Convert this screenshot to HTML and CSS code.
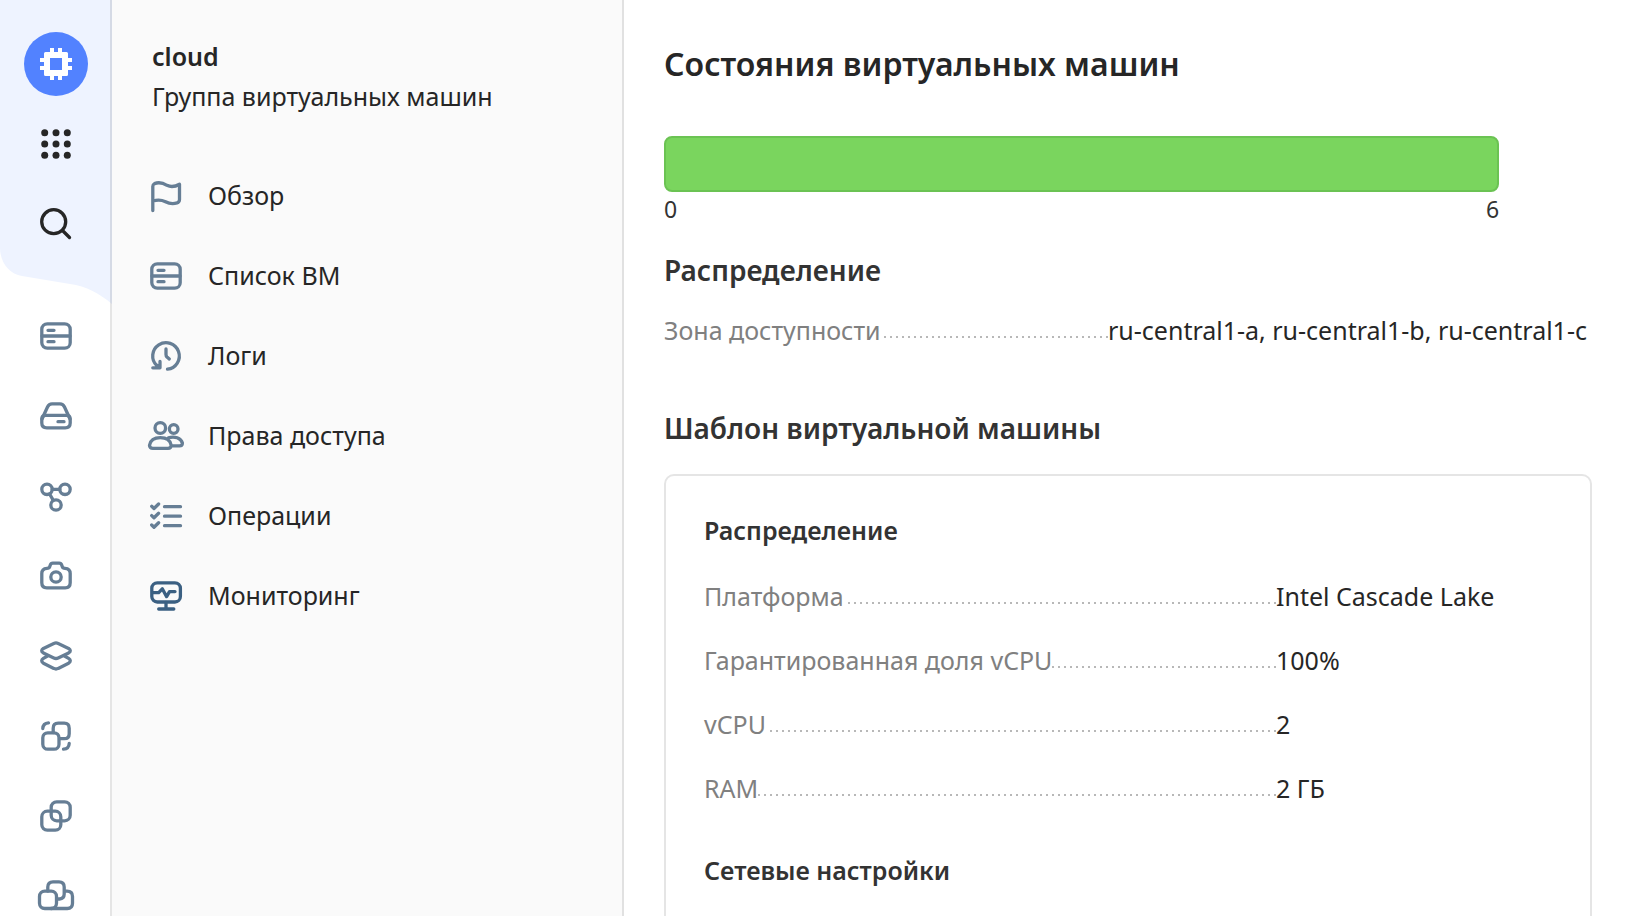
FILE: index.html
```html
<!DOCTYPE html>
<html lang="ru">
<head>
<meta charset="utf-8">
<meta name="viewport" content="width=device-width, initial-scale=1">
<title>cloud</title>
<link rel="stylesheet" href="styles.css">
</head>
<body>
<div class="app">
  <div class="rail">
    <svg class="rail-bg" viewBox="0 0 112 304" aria-hidden="true"><path d="M0 0H112V304C100 294 86 286 70 284L22 276C9 274 0 262 0 248Z"/></svg>
    <div class="rail-top">
      <a class="rail-item" href="#" aria-label="Compute Cloud">
        <span class="logo"><svg class="icon" viewBox="0 0 40 40"><path fill="#fff" fill-rule="evenodd" d="M14 4h4v4h4V4h4v4h4.500a1.500 1.500 0 0 1 1.500 1.500V14h4v4h-4v4h4v4h-4v4.500a1.500 1.500 0 0 1-1.500 1.500H26v4h-4v-4h-4v4h-4v-4H9.500A1.500 1.500 0 0 1 8 30.500V26H4v-4h4v-4H4v-4h4V9.500A1.500 1.500 0 0 1 9.500 8H14ZM14 14V26H26V14Z"/></svg></span>
      </a>
      <button class="rail-item" type="button" aria-label="Все сервисы">
        <svg class="icon" viewBox="0 0 40 40" fill="#262626"><circle cx="8.700" cy="8.700" r="3.500"/><circle cx="20" cy="8.700" r="3.500"/><circle cx="31.300" cy="8.700" r="3.500"/><circle cx="8.700" cy="20" r="3.500"/><circle cx="20" cy="20" r="3.500"/><circle cx="31.300" cy="20" r="3.500"/><circle cx="8.700" cy="31.300" r="3.500"/><circle cx="20" cy="31.300" r="3.500"/><circle cx="31.300" cy="31.300" r="3.500"/></svg>
      </button>
      <button class="rail-item" type="button" aria-label="Поиск">
        <svg class="icon line dark" viewBox="0 0 40 40"><circle cx="17.700" cy="17.700" r="12"/><path d="M26.500 26.500 33.500 33.500"/></svg>
      </button>
    </div>
    <nav class="rail-nav" aria-label="Сервисы">
      <a class="rail-item" href="#" aria-label="Виртуальные машины"><svg class="icon line" viewBox="0 0 40 40"><rect x="5.800" y="7.800" width="28.400" height="24.400" rx="5.500"/><path d="M6 20H34M12 14.300H18M12 25.700H18"/></svg></a>
      <a class="rail-item" href="#" aria-label="Диски"><svg class="icon line" viewBox="0 0 40 40"><path d="M6 23 11.500 11Q13 7.800 16 7.800H24Q27 7.800 28.500 11L34 23"/><path d="M9.500 19.300H30.500Q34.200 19.300 34.200 23V27Q34.200 31.800 29.200 31.800H10.800Q5.800 31.800 5.800 27V23Q5.800 19.300 9.500 19.300ZM22 25.700H28"/></svg></a>
      <a class="rail-item" href="#" aria-label="Группы"><svg class="icon line" viewBox="0 0 40 40"><circle cx="11" cy="13.300" r="5.200"/><circle cx="29" cy="13.300" r="5.200"/><circle cx="20" cy="29" r="5.200"/><path d="M16.200 13.300H23.800M13.600 18 17.300 24.300"/></svg></a>
      <a class="rail-item" href="#" aria-label="Снимки"><svg class="icon line" viewBox="0 0 40 40"><path d="M11 12.300Q13.200 12.300 13.700 10.800L14.200 9.200Q14.900 7.200 16.800 7.200H23.200Q25.100 7.200 25.800 9.200L26.300 10.800Q26.800 12.300 29 12.300Q34.200 12.600 34.200 17.500V26.800Q34.200 31.800 29.200 31.800H10.800Q5.800 31.800 5.800 26.800V17.500Q5.800 12.600 11 12.300Z"/><circle cx="20" cy="21" r="5.200"/></svg></a>
      <a class="rail-item" href="#" aria-label="Образы"><svg class="icon line" viewBox="0 0 40 40"><path d="M17.800 7.400Q20 6.400 22.200 7.400L32.600 12.400Q36 14.700 32.600 17L22.200 22Q20 23 17.800 22L7.400 17Q4 14.700 7.400 12.400Z"/><path d="M11.500 20 7.400 22.400Q4 24.700 7.400 27.200L17.800 32.400Q20 33.600 22.200 32.400L32.600 27.200Q36 24.700 32.600 22.400L28.500 20"/></svg></a>
      <a class="rail-item" href="#" aria-label="Размещение"><svg class="icon line" viewBox="0 0 40 40"><rect x="6.800" y="16.800" width="16.200" height="16.400" rx="5"/><path d="M17.200 16.500V12.200Q17.200 7.200 22.200 7.200H28.200Q33.200 7.200 33.200 12.200V17.700Q33.200 22.700 28.200 22.700H23.500M6.800 12.500Q7 7.200 12.500 6.800M33.200 27.500Q33 32.800 27.500 33.200"/></svg></a>
      <a class="rail-item" href="#" aria-label="Группы размещения"><svg class="icon line" viewBox="0 0 40 40"><rect x="15.200" y="5.800" width="19" height="19" rx="5.500"/><rect x="5.800" y="15.200" width="19" height="19" rx="5.500"/></svg></a>
      <a class="rail-item" href="#" aria-label="Кластеры"><svg class="icon line" viewBox="0 0 40 40"><rect x="3.500" y="15.200" width="17" height="17.300" rx="5.200"/><path d="M11.800 15V11Q11.800 5.800 17 5.800H23Q28.200 5.800 28.200 11V18Q28.200 22.500 23.500 23H21M28.500 15.200H31Q36.500 15.200 36.500 20.500V27.300Q36.500 32.500 31.300 32.500H15"/></svg></a>
    </nav>
  </div>

  <aside class="panel">
    <header class="panel-head">
      <strong class="panel-name">cloud</strong>
      <span>Группа виртуальных машин</span>
    </header>
    <nav class="menu" aria-label="Группа виртуальных машин">
      <a class="menu-item" href="#"><svg class="icon line" viewBox="0 0 40 40"><path d="M6.800 34.500V10.500Q6.800 8.500 8.500 7.600C14 5.400 18 7.500 21 9.300C25.500 11.600 29.500 10.500 33.500 8.200V23.500Q33.500 26 31 26.900C27 28.200 23 27.600 19.500 25.700C15 23.500 11 23.700 7 25"/></svg><span class="menu-label">Обзор</span></a>
      <a class="menu-item" href="#"><svg class="icon line" viewBox="0 0 40 40"><rect x="5.800" y="7.800" width="28.400" height="24.400" rx="5.500"/><path d="M6 20H34M12 14.300H18M12 25.700H18"/></svg><span class="menu-label">Список ВМ</span></a>
      <a class="menu-item" href="#"><svg class="icon line" viewBox="0 0 40 40"><path d="M21.500 33.200A13.300 13.300 0 1 0 10.800 29.600L13.500 31.500M14 25.500V31.800H6.800M11.500 29.500 13.500 31.500M20 13V18.500Q20 20 21 21L23.300 23"/></svg><span class="menu-label">Логи</span></a>
      <a class="menu-item" href="#"><svg class="icon line" viewBox="0 0 40 40"><circle cx="14.300" cy="12" r="5.300"/><circle cx="27.700" cy="13" r="4.300"/><path d="M6.800 32.300Q3.500 32.300 3.500 29.200C4.500 24 9 21.700 14.300 21.700S24.200 24 25.200 29.200Q25.200 32.300 22 32.300ZM22.500 21.800C28.500 19.800 35 22 36.400 27Q36.400 29.900 33.500 29.900H26"/></svg><span class="menu-label">Права доступа</span></a>
      <a class="menu-item" href="#"><svg class="icon line" viewBox="0 0 40 40"><path d="M18.500 10.700H34.500M18.500 20.200H34.500M18.500 29.700H34.500M5.700 10.300 8 12.500 12.600 8M5.700 19.600 8 21.800 12.600 17.300M5.700 29 8 31.200 12.600 26.700"/></svg><span class="menu-label">Операции</span></a>
      <a class="menu-item" href="#"><svg class="icon line accent" viewBox="0 0 40 40"><rect x="5.800" y="6.800" width="28.600" height="19.200" rx="5.500"/><path d="M20 26.500V32.500M12.700 33H27.800M7 16.700H12.700L16.300 12.800 20.600 20.600 23.500 15.600H29"/></svg><span class="menu-label">Мониторинг</span></a>
    </nav>
  </aside>

  <main class="main">
    <h1 class="title">Состояния виртуальных машин</h1>
    <div class="chart">
      <div class="bar"></div>
      <div class="scale"><span>0</span><span>6</span></div>
    </div>
    <h2 class="section">Распределение</h2>
    <dl class="facts">
      <div class="fact fact-wide"><dt>Зона доступности</dt><dd>ru-central1-a, ru-central1-b, ru-central1-c</dd></div>
    </dl>
    <h2 class="section section-template">Шаблон виртуальной машины</h2>
    <section class="card">
      <h3 class="card-title">Распределение</h3>
      <dl class="facts">
        <div class="fact"><dt>Платформа</dt><dd>Intel Cascade Lake</dd></div>
        <div class="fact"><dt>Гарантированная доля vCPU</dt><dd>100%</dd></div>
        <div class="fact"><dt>vCPU</dt><dd>2</dd></div>
        <div class="fact"><dt>RAM</dt><dd>2 ГБ</dd></div>
      </dl>
      <h3 class="card-title">Сетевые настройки</h3>
    </section>
  </main>
</div>
</body>
</html>
```
FILE: styles.css
```css
* { box-sizing: border-box; }

body {
  margin: 0;
  background: #fff;
  color: #262626;
  font-family: "Noto Sans", "Open Sans", sans-serif;
  font-size: 25px;
  line-height: 40px;
}

h1, h2, h3, dl, dd { margin: 0; }
a { color: inherit; text-decoration: none; }

.app {
  display: flex;
  height: 100vh;
  overflow: hidden;
}

.icon { display: block; flex: none; width: 40px; height: 40px; }
.line {
  fill: none;
  stroke: #667e95;
  stroke-width: 3.3;
  stroke-linecap: round;
  stroke-linejoin: round;
}
.dark { stroke: #262626; }
.accent { stroke: #3b6082; }

/* Service rail */
.rail {
  position: relative;
  flex: none;
  width: 112px;
  overflow: hidden;
  padding-top: 24px;
}
.rail::after {
  content: "";
  position: absolute;
  inset: 0 0 0 auto;
  width: 2px;
  background: rgba(0, 0, 0, 0.1);
}
.rail-bg {
  position: absolute;
  top: 0;
  left: 0;
  width: 112px;
  height: 304px;
  fill: #eef3ff;
}
.rail-top, .rail-nav {
  position: relative;
  display: flex;
  flex-direction: column;
}
.rail-nav { margin-top: 32px; }
.rail-item {
  display: flex;
  align-items: center;
  justify-content: center;
  width: 112px;
  height: 80px;
  padding: 0;
  border: 0;
  background: none;
  cursor: pointer;
}
.logo {
  display: flex;
  align-items: center;
  justify-content: center;
  width: 64px;
  height: 64px;
  border-radius: 50%;
  background: #5282ff;
}

/* Resource panel */
.panel {
  flex: none;
  width: 512px;
  overflow: hidden;
  border-right: 2px solid #e1e1e1;
  background: #fafafa;
}
.panel-head {
  display: flex;
  flex-direction: column;
  padding: 36px 40px 0;
}
.panel-name { font-weight: 600; }
.menu {
  display: flex;
  flex-direction: column;
  margin-top: 40px;
}
.menu-item {
  display: flex;
  align-items: center;
  gap: 22px;
  height: 80px;
  padding: 0 34px;
}
.menu-label { padding-bottom: 2px; }

/* Content */
.main {
  flex: 1;
  min-width: 0;
  overflow: hidden;
  padding: 44px 40px 0;
}
.title {
  font-size: 32px;
  font-weight: 600;
}
.chart {
  width: 90%;
  margin-top: 52px;
}
.bar {
  height: 56px;
  border: 2px solid #6bc353;
  border-radius: 8px;
  background: #7ad55e;
}
.scale {
  display: flex;
  justify-content: space-between;
  color: #333;
  font-size: 23px;
  line-height: 34px;
}
.section {
  margin-top: 24px;
  color: #333;
  font-size: 28px;
  font-weight: 600;
}
.section-template { margin-top: 58px; }
.facts {
  display: flex;
  flex-direction: column;
  gap: 24px;
  margin-top: 20px;
}
.fact { display: flex; }
.fact dt {
  display: flex;
  flex: 1;
  color: #808080;
  white-space: nowrap;
}
.fact dt::after {
  content: "";
  flex: 1;
  height: 2px;
  margin-top: 26px;
  background: repeating-linear-gradient(to left, #b8b8b8 0 2px, transparent 2px 6px);
}
.fact dd {
  flex: none;
  width: 276px;
  white-space: nowrap;
}
.fact-wide dd { width: 484px; }
.card {
  min-height: 520px;
  margin-top: 26px;
  padding: 34px 38px;
  border: 2px solid #e5e5e5;
  border-radius: 10px;
}
.card-title {
  color: #333;
  font-size: 25px;
  font-weight: 600;
}
.card .facts { margin-top: 26px; }
.facts + .card-title { margin-top: 42px; }
```
